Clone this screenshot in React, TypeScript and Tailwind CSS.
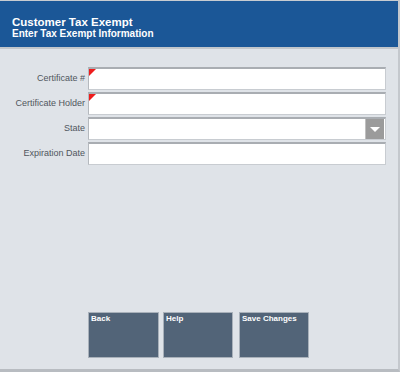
import { ReactNode } from "react";

function Field({ label, required, select }: { label: string; required?: boolean; select?: boolean }) {
  return (
    <div className="flex items-center h-[23px] mb-[2px]">
      <div className="w-[88px] pr-[3px] text-right text-[9px] text-[#50565d]">{label}</div>
      <div className="relative w-[298px] h-[23px] bg-white border-t-2 border-t-[#a9adb2] border-l border-l-[#b5b9be] border-r border-r-[#c8ccd1] border-b border-b-[#c8ccd1]">
        {required && (
          <div className="absolute left-0 top-0 w-0 h-0 border-t-[7px] border-t-[#ee1c1c] border-r-[7px] border-r-transparent" />
        )}
        {select && (
          <div className="absolute right-[1px] top-0 w-[19px] h-[20px] bg-[#9b9b9b] border-l border-l-[#c0c0c0] flex items-center justify-center">
            <div className="w-0 h-0 border-l-[5px] border-l-transparent border-r-[5px] border-r-transparent border-t-[5px] border-t-white" />
          </div>
        )}
      </div>
    </div>
  );
}

function Btn({ children, className = "" }: { children: ReactNode; className?: string }) {
  return (
    <div className={`h-[46px] bg-[#526478] border border-[#a9b1ba] px-[2px] pt-[2px] text-[8px] font-bold text-white leading-none ${className}`}>
      {children}
    </div>
  );
}

export default function App() {
  return (
    <div className="w-[400px] h-[372px] bg-[#dfe3e8] flex flex-col border-r-2 border-r-[#c4c8cd] border-b-[3px] border-b-[#b8bcc1]" style={{ fontFamily: '"Liberation Sans", Arial, sans-serif' }}>
      <div className="h-[49px] border-t border-t-[#c8ccd1] bg-[#1b5797] border-b-2 border-b-[#c2c6cb] pl-[12px] pt-[15px] text-white font-bold">
        <div className="text-[11.5px] leading-[12px]">Customer Tax Exempt</div>
        <div className="text-[10px] leading-[12px]">Enter Tax Exempt Information</div>
      </div>
      <div className="pt-[18px]">
        <Field label="Certificate #" required />
        <Field label="Certificate Holder" required />
        <Field label="State" select />
        <Field label="Expiration Date" />
      </div>
      <div className="flex-1" />
      <div className="flex pl-[88px] pb-[11px]">
        <Btn className="w-[71px]">Back</Btn>
        <Btn className="w-[70px] ml-[4px]">Help</Btn>
        <Btn className="w-[70px] ml-[6px]">Save Changes</Btn>
      </div>
    </div>
  );
}
